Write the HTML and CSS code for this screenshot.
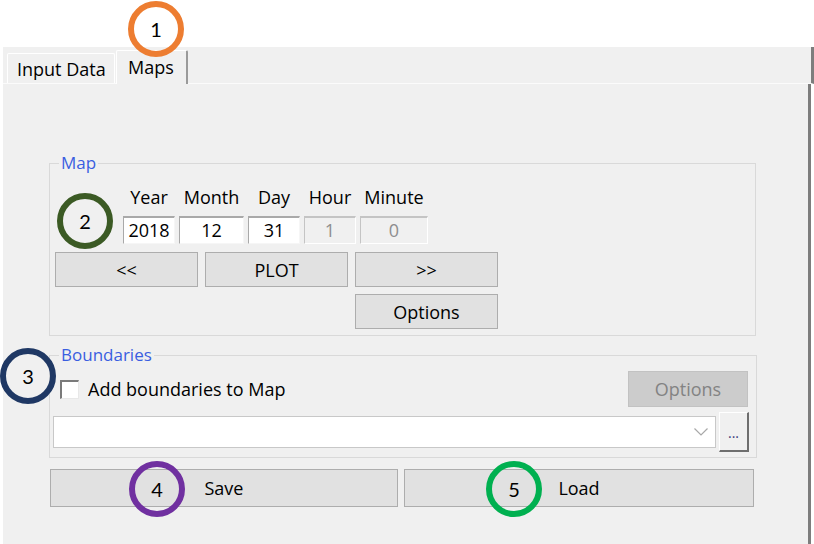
FILE: index.html
```html
<!DOCTYPE html>
<html>
<head>
<meta charset="utf-8">
<link rel="stylesheet" href="styles.css">
</head>
<body>
<div class="window">
  <div class="tabstrip">
    <div class="tab">Input Data</div>
    <div class="tab tab-active">Maps</div>
  </div>
  <div class="panel">
    <fieldset class="group group-map">
      <legend>Map</legend>
      <div class="date-grid">
        <span class="lbl">Year</span>
        <span class="lbl">Month</span>
        <span class="lbl">Day</span>
        <span class="lbl">Hour</span>
        <span class="lbl">Minute</span>
        <div class="field">2018</div>
        <div class="field">12</div>
        <div class="field">31</div>
        <div class="field field-disabled">1</div>
        <div class="field field-disabled">0</div>
      </div>
      <div class="btn-row">
        <div class="btn btn-nav">&lt;&lt;</div>
        <div class="btn btn-nav">PLOT</div>
        <div class="btn btn-nav">&gt;&gt;</div>
      </div>
      <div class="btn-row btn-row-options">
        <div class="btn btn-nav">Options</div>
      </div>
    </fieldset>

    <fieldset class="group group-bounds">
      <legend>Boundaries</legend>
      <div class="check-row">
        <span class="checkbox"></span>
        <span class="check-label">Add boundaries to Map</span>
        <div class="btn btn-disabled">Options</div>
      </div>
      <div class="combo-row">
        <div class="combo">
          <svg class="chev" width="14" height="8" viewBox="0 0 14 8"><polyline points="0.5,0.5 7,7 13.5,0.5" fill="none" stroke="#a8a8a8" stroke-width="1.2"/></svg>
        </div>
        <div class="browse">...</div>
      </div>
    </fieldset>

    <div class="io-row">
      <div class="btn btn-save">Save</div>
      <div class="btn btn-load">Load</div>
    </div>
  </div>
</div>

<div class="badge badge-1">1</div>
<div class="badge badge-2">2</div>
<div class="badge badge-3">3</div>
<div class="badge badge-4">4</div>
<div class="badge badge-5">5</div>
</body>
</html>
```

FILE: styles.css
```css
* { box-sizing: border-box; }
html, body {
  margin: 0;
  padding: 0;
  background: #ffffff;
  width: 814px;
  height: 544px;
  overflow: hidden;
  font-family: "Open Sans", "Noto Sans", sans-serif;
  font-size: 18px;
  color: #000;
}
.window {
  margin: 47px 0 0 3px;
  width: 811px;
}
.tabstrip {
  height: 37px;
  background: #f0f0f0;
  border-right: 3px solid #7d7d7d;
  border-bottom: 1px solid #fbfbfb;
  display: flex;
  align-items: flex-end;
  padding-left: 4px;
}
.tab {
  height: 30px;
  width: 108px;
  padding-left: 9px;
  line-height: 30px;
  border: 1px solid #ffffff;
  border-bottom: none;
  border-radius: 2px 2px 0 0;
  background: #f0f0f0;
  margin-right: 1px;
}
.tab-active {
  height: 34px;
  width: 72px;
  margin-bottom: -1px;
  padding-left: 11px;
  line-height: 32px;
  border-right: 2px solid #9a9a9a;
  position: relative;
}
.panel {
  width: 808px;
  height: 460px;
  background: #f0f0f0;
  border-right: 3px solid #7d7d7d;
  margin-right: 3px;
  padding: 69px 0 0 46px;
}
.group {
  margin: 0;
  padding: 0;
  border: 1px solid #d9d9d9;
  min-width: 0;
}
.group legend {
  margin-left: 9px;
  padding: 0 2px;
  color: #3a5ee0;
  line-height: 20px;
  font-size: 17px;
}
.group-map {
  width: 707px;
  padding-bottom: 6px;
}
.date-grid {
  display: grid;
  grid-template-columns: 52px 65px 52px 52px 68px;
  column-gap: 4px;
  margin: 14px 0 0 73px;
}
.lbl {
  text-align: center;
  line-height: 20px;
  margin-bottom: 9px;
}
.field {
  height: 28px;
  background: #fff;
  border-style: solid;
  border-width: 2px 1px 1px 1px;
  border-color: #a9a9a9 #f6f6f6 #f6f6f6 #a9a9a9;
  text-align: center;
  line-height: 25px;
}
.field-disabled {
  background: #f0f0f0;
  border-color: #c4c4c4 #ffffff #ffffff #c4c4c4;
  color: #8e8e8e;
}
.btn-row {
  display: flex;
  gap: 7px;
  margin: 8px 0 0 5px;
}
.btn-row-options {
  margin-top: 7px;
  padding-left: 300px;
}
.btn {
  background: #e1e1e1;
  border: 1px solid #adadad;
  display: flex;
  align-items: center;
  justify-content: center;
}
.btn-nav {
  width: 143px;
  height: 35px;
}
.group-bounds {
  width: 708px;
  margin-top: 9px;
  padding-bottom: 5px;
}
.check-row {
  display: flex;
  align-items: center;
  margin-top: 6px;
  padding-left: 10px;
}
.checkbox {
  width: 19px;
  height: 19px;
  background: #fff;
  border-style: solid;
  border-width: 2px 1px 1px 2px;
  border-color: #7a7a7a #e8e8e8 #e8e8e8 #7a7a7a;
}
.check-label {
  margin-left: 9px;
  flex: 1;
}
.btn-disabled {
  width: 120px;
  height: 36px;
  margin-right: 8px;
  background: #cccccc;
  border-color: #c2c2c2;
  color: #838383;
}
.combo-row {
  display: flex;
  align-items: center;
  margin: 5px 0 0 3px;
  gap: 3px;
}
.combo {
  width: 663px;
  height: 32px;
  background: #fff;
  border: 1px solid #c8c8c8;
  display: flex;
  align-items: center;
  justify-content: flex-end;
  padding-right: 7px;
}
.browse {
  width: 30px;
  height: 40px;
  background: #f0f0f0;
  border-style: solid;
  border-width: 1px 2px 2px 1px;
  border-color: #ffffff #6e6e6e #6e6e6e #ffffff;
  text-align: center;
  font-size: 14px;
  line-height: 40px;
  color: #3b3b7a;
}
.io-row {
  display: flex;
  gap: 6px;
  margin: 11px 0 0 1px;
}
.btn-save { width: 348px; height: 38px; }
.btn-load { width: 350px; height: 38px; }

.badge {
  position: absolute;
  width: 56px;
  height: 56px;
  border-radius: 50%;
  border: 6px solid #000;
  display: flex;
  align-items: center;
  justify-content: center;
  font-family: Lato, "Liberation Sans", sans-serif;
  font-size: 20px;
  color: #000;
}
.badge-1 { left: 128px; top: 1px; border-color: #ed7d31; }
.badge-2 { left: 57px; top: 193px; border-color: #3b5a24; }
.badge-3 { left: 0px; top: 348px; border-color: #1f3864; }
.badge-4 { left: 129px; top: 461px; border-color: #7030a0; }
.badge-5 { left: 486px; top: 461px; border-color: #00b050; }
```
